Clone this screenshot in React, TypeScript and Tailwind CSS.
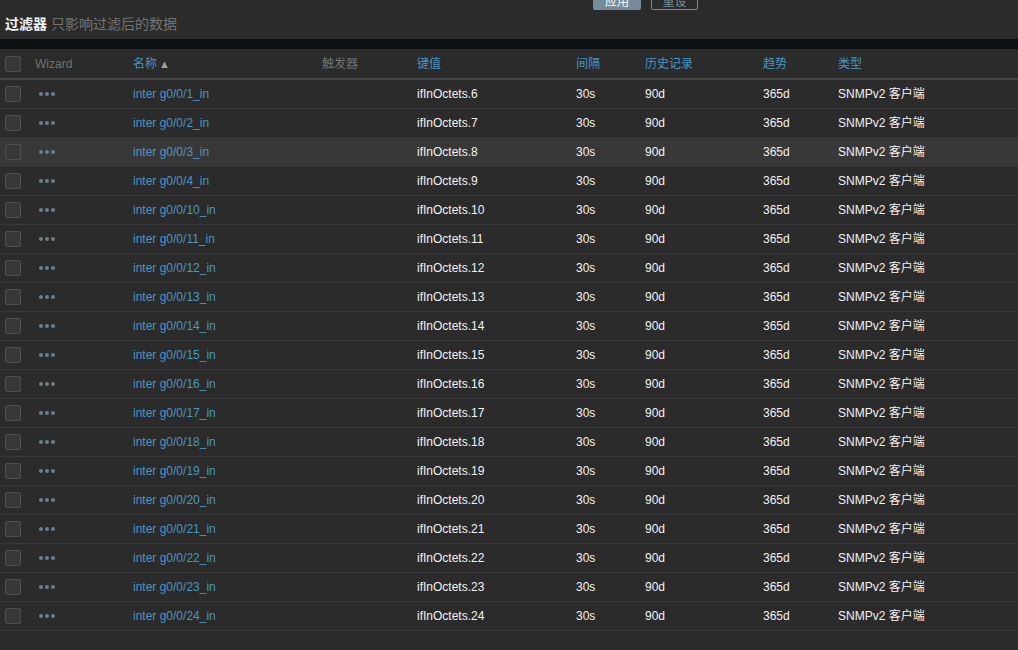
import React from 'react'

const cols = 'grid grid-cols-[35px_98px_189px_95px_159px_69px_118px_75px_1fr] items-center'

const ports = [1, 2, 3, 4, 10, 11, 12, 13, 14, 15, 16, 17, 18, 19, 20, 21, 22, 23, 24]

function Checkbox() {
  return <span className="block w-4 h-4 rounded-[2px] border border-[#4f4f4f] bg-[#383838]" />
}

function Dots() {
  return (
    <span className="flex gap-[2px] pl-[4px]">
      <span className="w-1 h-1 rounded-full bg-[#6d7f8b]" />
      <span className="w-1 h-1 rounded-full bg-[#6d7f8b]" />
      <span className="w-1 h-1 rounded-full bg-[#6d7f8b]" />
    </span>
  )
}

export default function App() {
  return (
    <div
      className="min-h-[650px] bg-[#2b2b2b] text-[12px] text-[#f2f2f2]"
      style={{ fontFamily: '"Liberation Sans", Arial, "Noto Sans CJK SC", sans-serif' }}
    >
      {/* 过滤器 */}
      <div className="h-[39px]">
        <div className="h-[10px] overflow-hidden flex items-end pl-[593px] gap-[10px]">
          <button className="h-6 w-12 rounded-[2px] bg-[#768d99] text-white leading-[6px] pb-[5px] flex items-end justify-center">
            应用
          </button>
          <button className="h-6 w-[47px] rounded-[2px] border border-[#768d99] text-[#768d99] flex items-end justify-center pb-[4px] leading-[6px]">
            重设
          </button>
        </div>
        <div className="pl-[5px] pt-[6px] text-[14px] leading-[16px]">
          <span className="font-bold text-[#f2f2f2]">过滤器</span>
          <span className="text-[#737373]"> 只影响过滤后的数据</span>
        </div>
      </div>

      <div className="h-[10px] bg-[#0e1012]" />

      {/* 表格 */}
      <div className={`${cols} h-[31px] border-b-2 border-[#454545] text-[#4796c4]`}>
        <div className="pl-[5px]">
          <Checkbox />
        </div>
        <div className="text-[#737373]">Wizard</div>
        <div>
          名称<span className="text-[#a0a0a0] text-[11px] ml-[2px]">▲</span>
        </div>
        <div className="text-[#737373]">触发器</div>
        <div>键值</div>
        <div>间隔</div>
        <div>历史记录</div>
        <div>趋势</div>
        <div>类型</div>
      </div>

      {ports.map((p, i) => (
        <div
          key={p}
          className={`${cols} h-[29px] border-b border-[#383838] ${i === 2 ? 'bg-[#383838]' : ''}`}
        >
          <div className="pl-[5px]">
            <Checkbox />
          </div>
          <div>
            <Dots />
          </div>
          <div className="text-[#4796c4]">inter g0/0/{p}_in</div>
          <div />
          <div>ifInOctets.{i + 6}</div>
          <div>30s</div>
          <div>90d</div>
          <div>365d</div>
          <div>SNMPv2 客户端</div>
        </div>
      ))}
    </div>
  )
}
